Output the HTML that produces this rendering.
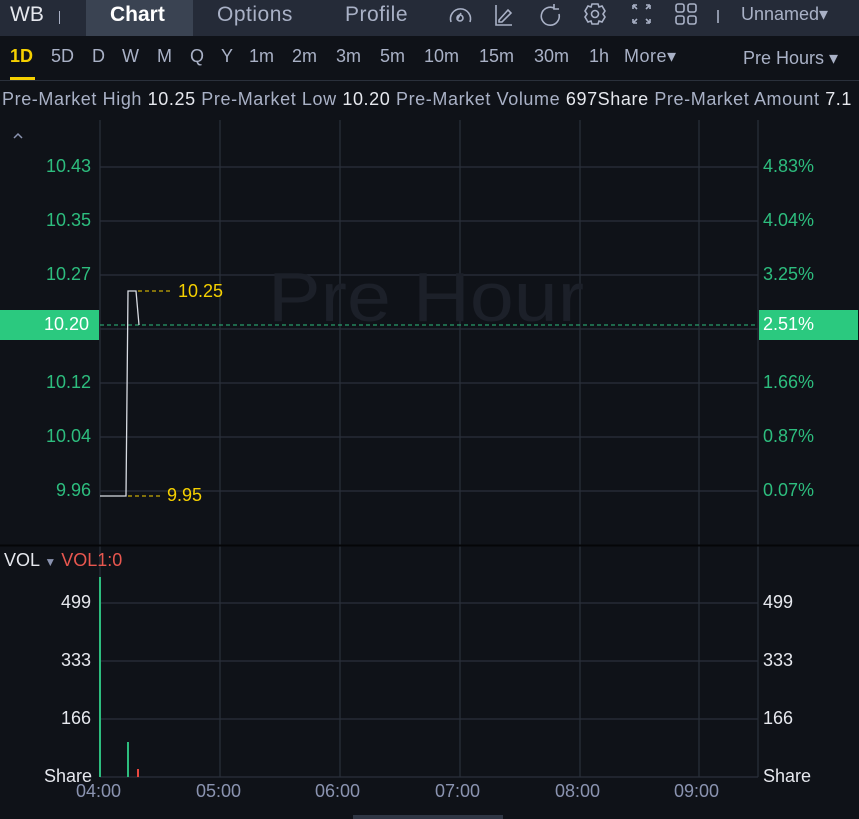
<!DOCTYPE html>
<html><head><meta charset="utf-8"><style>
*{margin:0;padding:0;box-sizing:border-box}
body{width:859px;height:819px;background:#0f1218;font-family:"Liberation Sans",sans-serif;position:relative;overflow:hidden;color:#c8cdd8}
.a{position:absolute;white-space:nowrap}
.top{position:absolute;left:0;top:0;width:859px;height:36px;background:#252b38}
.tab{font-size:21px;color:#a9b1c6;top:3px}
.tf{font-size:18px;color:#a9b1c6;top:46px}
.g{font-size:18px;color:#2dbd7e}
.w{font-size:18px;color:#e6e8ee}
.t{font-size:18px;color:#8a93b0}
</style></head><body>
<div class="top"></div>
<div class="a" style="left:86px;top:0;width:107px;height:36px;background:#3a4352"></div>
<div class="a tab" style="left:10px;color:#e6e8ee">WB</div>
<div class="a" style="left:59px;top:11px;width:1px;height:13px;background:#a9b1c6"></div>
<div class="a tab" style="left:110px;color:#fff;font-weight:bold">Chart</div>
<div class="a tab" style="left:217px;letter-spacing:0.5px">Options</div>
<div class="a tab" style="left:345px;letter-spacing:0.5px">Profile</div>
<svg class="a" style="left:440px;top:0" width="300" height="36" fill="none" stroke="#a9b1c6" stroke-width="1.6">
<path d="M11 22a10 10 0 1 1 19 0"/><path d="M17 20l4-7"/><circle cx="20" cy="18" r="3"/>
<path d="M56 5v20h16M59 20l9-10 3 3-9 9h-3z"/>
<path d="M114 8a9 9 0 1 0 5 6M114 4v5h5"/>
<circle cx="155" cy="14" r="3.5"/><path d="M152 4h6l1 3 3-1 3 5-2 3 2 3-3 5-3-1-1 3h-6l-1-3-3 1-3-5 2-3-2-3 3-5 3 1z"/>
<path d="M193 5h4M193 5v4M210 5h-4M210 5v4M193 23h4M193 23v-4M210 23h-4M210 23v-4M194 6l3 3M209 6l-3 3M194 22l3-3M209 22l-3-3"/>
<rect x="236" y="4" width="8" height="8" rx="2"/><rect x="248" y="4" width="8" height="8" rx="2"/><rect x="236" y="16" width="8" height="8" rx="2"/><rect x="248" y="16" width="8" height="8" rx="2"/>
<path d="M278 10v13"/></svg>
<div class="a" style="left:741px;top:4px;font-size:18px;color:#a9b1c6">Unnamed▾</div>
<div class="a tf" style="left:10px;color:#f5d000;font-weight:bold">1D</div>
<div class="a" style="left:10px;top:77px;width:25px;height:3px;background:#f5d000"></div>
<div class="a tf" style="left:51px">5D</div>
<div class="a tf" style="left:92px">D</div>
<div class="a tf" style="left:122px">W</div>
<div class="a tf" style="left:157px">M</div>
<div class="a tf" style="left:190px">Q</div>
<div class="a tf" style="left:221px">Y</div>
<div class="a tf" style="left:249px">1m</div>
<div class="a tf" style="left:292px">2m</div>
<div class="a tf" style="left:336px">3m</div>
<div class="a tf" style="left:380px">5m</div>
<div class="a tf" style="left:424px">10m</div>
<div class="a tf" style="left:479px">15m</div>
<div class="a tf" style="left:534px">30m</div>
<div class="a tf" style="left:589px">1h</div>
<div class="a tf" style="left:624px;letter-spacing:0.5px">More▾</div>
<div class="a tf" style="left:743px;top:48px;font-size:18px">Pre Hours ▾</div>
<div class="a" style="left:0;top:80px;width:859px;height:1px;background:#2a303b"></div>
<div class="a" style="left:2px;top:89px;font-size:18px;letter-spacing:0.6px;color:#a9b1c6">Pre-Market High <span style="color:#e6e8ee">10.25</span> Pre-Market Low <span style="color:#e6e8ee">10.20</span> Pre-Market Volume <span style="color:#e6e8ee">697Share</span> Pre-Market Amount <span style="color:#e6e8ee">7.1</span></div>
<svg class="a" style="left:0;top:0" width="859" height="819">
<g stroke="#2a303b" stroke-width="1.2">
<path d="M100 120V777M220 120V777M340 120V777M460 120V777M580 120V777M699 120V777M758 120V777"/>
<path d="M100 167H758M100 221H758M100 275H758M100 329H758M100 383H758M100 437H758M100 491H758M100 603H758M100 661H758M100 719H758M100 777H758"/>
<path d="M0 545.5H859" stroke="#050608" stroke-width="2"/>
</g>
<text x="268" y="321" font-size="70" fill="#1c2029" font-family="Liberation Sans" textLength="316" lengthAdjust="spacingAndGlyphs">Pre Hour</text>
<path d="M14 138l4-4 4 4" fill="none" stroke="#8a93b0" stroke-width="1.5"/>
<path d="M100 325H758" stroke="#2dbd7e" stroke-dasharray="4 3"/>
<polyline points="100,496 126,496 128,291 136,291 139,325" fill="none" stroke="#d8dbe2" stroke-width="1.3"/>
<path d="M138 291H171M128 496H160" stroke="#f5d000" stroke-dasharray="4 3"/>
<path d="M100 577V777M128 742V777" stroke="#2dbd7e" stroke-width="2"/>
<path d="M138 769V777" stroke="#e8473f" stroke-width="2"/>
<rect x="353" y="815" width="150" height="4" fill="#2f3644"/>
</svg>
<div class="a" style="left:178px;top:281px;font-size:18px;color:#f5d000">10.25</div>
<div class="a" style="left:167px;top:485px;font-size:18px;color:#f5d000">9.95</div>
<div class="a" style="left:0;top:310px;width:99px;height:30px;background:#2bc97f"></div>
<div class="a" style="left:759px;top:310px;width:99px;height:30px;background:#2bc97f"></div>
<div class="a g" style="right:768px;top:156px">10.43</div>
<div class="a g" style="right:768px;top:210px">10.35</div>
<div class="a g" style="right:768px;top:264px">10.27</div>
<div class="a w" style="right:770px;top:314px;color:#fff">10.20</div>
<div class="a g" style="right:768px;top:372px">10.12</div>
<div class="a g" style="right:768px;top:426px">10.04</div>
<div class="a g" style="right:768px;top:480px">9.96</div>
<div class="a g" style="left:763px;top:156px">4.83%</div>
<div class="a g" style="left:763px;top:210px">4.04%</div>
<div class="a g" style="left:763px;top:264px">3.25%</div>
<div class="a w" style="left:763px;top:314px;color:#fff">2.51%</div>
<div class="a g" style="left:763px;top:372px">1.66%</div>
<div class="a g" style="left:763px;top:426px">0.87%</div>
<div class="a g" style="left:763px;top:480px">0.07%</div>
<div class="a w" style="left:4px;top:550px">VOL <span style="color:#8a93b0;font-size:12px">▼</span> <span style="color:#e8574f">VOL1:0</span></div>
<div class="a w" style="right:768px;top:592px">499</div>
<div class="a w" style="right:768px;top:650px">333</div>
<div class="a w" style="right:768px;top:708px">166</div>
<div class="a w" style="right:767px;top:766px">Share</div>
<div class="a w" style="left:763px;top:592px">499</div>
<div class="a w" style="left:763px;top:650px">333</div>
<div class="a w" style="left:763px;top:708px">166</div>
<div class="a w" style="left:763px;top:766px">Share</div>
<div class="a t" style="left:76px;top:781px">04:00</div>
<div class="a t" style="left:196px;top:781px">05:00</div>
<div class="a t" style="left:315px;top:781px">06:00</div>
<div class="a t" style="left:435px;top:781px">07:00</div>
<div class="a t" style="left:555px;top:781px">08:00</div>
<div class="a t" style="left:674px;top:781px">09:00</div>
</body></html>
